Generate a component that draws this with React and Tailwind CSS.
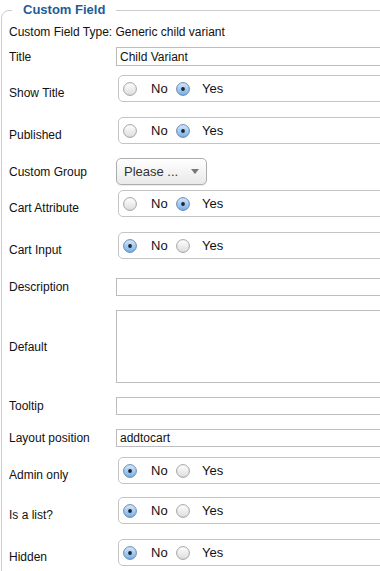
import React from 'react'

function Radio({ checked }) {
  return (
    <svg width="14" height="14" viewBox="0 0 14 14" className="shrink-0">
      <defs>
        <linearGradient id="rOff" x1="0" y1="0" x2="0" y2="1">
          <stop offset="0" stopColor="#ffffff" />
          <stop offset="1" stopColor="#dcdcdc" />
        </linearGradient>
        <linearGradient id="rOn" x1="0" y1="0" x2="0" y2="1">
          <stop offset="0" stopColor="#d6e8fb" />
          <stop offset="1" stopColor="#74aee9" />
        </linearGradient>
      </defs>
      {checked ? (
        <>
          <circle cx="7" cy="7" r="6.4" fill="url(#rOn)" stroke="#5f7fa3" strokeWidth="0.9" />
          <circle cx="7" cy="7" r="1.9" fill="#1c2530" />
        </>
      ) : (
        <circle cx="7" cy="7" r="6.4" fill="url(#rOff)" stroke="#9a9a9a" strokeWidth="0.9" />
      )}
    </svg>
  )
}

function YesNo({ yes }) {
  return (
    <div className="ml-[2px] mb-[8px] h-[27px] w-[300px] shrink-0 rounded-[5px] border border-[#c4c4c4] bg-white flex items-center pl-[4px] text-[13px] text-[#111]">
      <Radio checked={!yes} />
      <span className="ml-[14px] w-[25px]">No</span>
      <Radio checked={yes} />
      <span className="ml-[12px]">Yes</span>
    </div>
  )
}

function Row({ label, mt, children }) {
  return (
    <div className="flex items-center" style={{ marginTop: mt }}>
      <div className="w-[107px] shrink-0 text-[12px] text-[#111]">{label}</div>
      {children}
    </div>
  )
}

function TextBox({ value, h = 18 }) {
  return (
    <div
      className="w-[300px] shrink-0 border border-[#bdbdbd] bg-white pl-[3px] text-[12px] text-[#111] flex items-center"
      style={{ height: h }}
    >
      {value}
    </div>
  )
}

export default function App() {
  return (
    <div className="w-[380px] h-[571px] overflow-hidden bg-white" style={{ fontFamily: '"Liberation Sans", Arial, sans-serif' }}>
      <fieldset className="ml-px mt-[2px] w-[420px] h-[600px] border border-[#cccccc] rounded-tl-[8px] pl-[7px]">
        <legend className="ml-[3px] px-[11px] text-[13px] leading-[16px] font-bold text-[#1f5c96]">Custom Field</legend>
        <div className="mt-[7px] text-[12px] leading-[14px] text-[#111]">Custom Field Type: Generic child variant</div>

        <Row label="Title" mt={8}>
          <TextBox value="Child Variant" h={19} />
        </Row>
        <Row label="Show Title" mt={9}>
          <YesNo yes />
        </Row>
        <Row label="Published" mt={7}>
          <YesNo yes />
        </Row>
        <Row label="Custom Group" mt={6}>
          <div className="w-[91px] h-[27px] rounded-[5px] border border-[#adadad] bg-gradient-to-b from-white to-[#e9e9e9] flex items-center pl-[7px] pr-[7px] text-[13px] text-[#333] shadow-[0_1px_1px_rgba(0,0,0,0.08)]">
            <span className="flex-1">Please ...</span>
            <svg width="8" height="5" viewBox="0 0 8 5">
              <path d="M0 0 H8 L4 5 Z" fill="#777" />
            </svg>
          </div>
        </Row>
        <Row label="Cart Attribute" mt={5}>
          <YesNo yes />
        </Row>
        <Row label="Cart Input" mt={7}>
          <YesNo />
        </Row>
        <Row label="Description" mt={11}>
          <TextBox />
        </Row>
        <Row label="Default" mt={14}>
          <TextBox h={73} />
        </Row>
        <Row label="Tooltip" mt={14}>
          <TextBox />
        </Row>
        <Row label="Layout position" mt={14}>
          <TextBox value="addtocart" />
        </Row>
        <Row label="Admin only" mt={10}>
          <YesNo />
        </Row>
        <Row label="Is a list?" mt={5}>
          <YesNo />
        </Row>
        <Row label="Hidden" mt={7}>
          <YesNo />
        </Row>
      </fieldset>
    </div>
  )
}
